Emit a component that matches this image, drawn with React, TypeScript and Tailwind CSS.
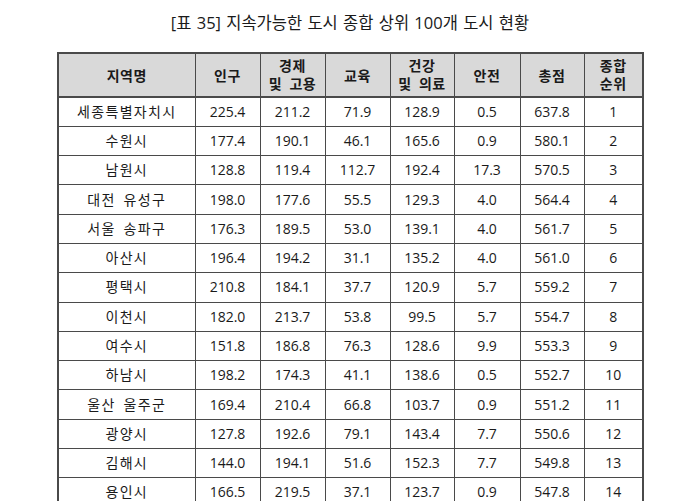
const rows: [string, string, string, string, string, string, string, string][] = [
  ["세종특별자치시", "225.4", "211.2", "71.9", "128.9", "0.5", "637.8", "1"],
  ["수원시", "177.4", "190.1", "46.1", "165.6", "0.9", "580.1", "2"],
  ["남원시", "128.8", "119.4", "112.7", "192.4", "17.3", "570.5", "3"],
  ["대전 유성구", "198.0", "177.6", "55.5", "129.3", "4.0", "564.4", "4"],
  ["서울 송파구", "176.3", "189.5", "53.0", "139.1", "4.0", "561.7", "5"],
  ["아산시", "196.4", "194.2", "31.1", "135.2", "4.0", "561.0", "6"],
  ["평택시", "210.8", "184.1", "37.7", "120.9", "5.7", "559.2", "7"],
  ["이천시", "182.0", "213.7", "53.8", "99.5", "5.7", "554.7", "8"],
  ["여수시", "151.8", "186.8", "76.3", "128.6", "9.9", "553.3", "9"],
  ["하남시", "198.2", "174.3", "41.1", "138.6", "0.5", "552.7", "10"],
  ["울산 울주군", "169.4", "210.4", "66.8", "103.7", "0.9", "551.2", "11"],
  ["광양시", "127.8", "192.6", "79.1", "143.4", "7.7", "550.6", "12"],
  ["김해시", "144.0", "194.1", "51.6", "152.3", "7.7", "549.8", "13"],
  ["용인시", "166.5", "219.5", "37.1", "123.7", "0.9", "547.8", "14"],
];

const widths = ["w-[137px]", "w-[65px]", "w-[65px]", "w-[65px]", "w-[64px]", "w-[66px]", "w-[64px]", "w-[59px]"];

export default function App() {
  return (
    <div
      className="w-[700px] h-[501px] overflow-hidden bg-white text-[#1a1a1a]"
      style={{ fontFamily: '"Open Sans", "Noto Sans CJK KR", sans-serif' }}
    >
      <h1 className="pt-[11px] text-center text-[16.5px] leading-[24px] font-normal [word-spacing:1px]">
        [표 35] 지속가능한 도시 종합 상위 100개 도시 현황
      </h1>

      <table className="mt-[17px] ml-[57px] w-[585px] table-fixed border-collapse border-2 border-[#4a4a4a]">
        <colgroup>
          {widths.map((w, i) => (
            <col key={i} className={w} />
          ))}
        </colgroup>
        <thead>
          <tr className="h-[44px] bg-[#d9d9d9] border-b-2 border-[#4a4a4a]">
            <th className="border border-[#4a4a4a] text-[14px] font-bold tracking-[0.5px]">지역명</th>
            <th className="border border-[#4a4a4a] text-[14px] font-bold tracking-[0.5px]">인구</th>
            <th className="border border-[#4a4a4a] text-[14px] font-bold leading-[18px] tracking-[0.5px] [word-spacing:3px]">
              경제
              <br />및 고용
            </th>
            <th className="border border-[#4a4a4a] text-[14px] font-bold tracking-[0.5px]">교육</th>
            <th className="border border-[#4a4a4a] text-[14px] font-bold leading-[18px] tracking-[0.5px] [word-spacing:3px]">
              건강
              <br />및 의료
            </th>
            <th className="border border-[#4a4a4a] text-[14px] font-bold tracking-[0.5px]">안전</th>
            <th className="border border-[#4a4a4a] text-[14px] font-bold tracking-[0.5px]">총점</th>
            <th className="border border-[#4a4a4a] text-[14px] font-bold leading-[18px] tracking-[0.5px]">
              종합
              <br />순위
            </th>
          </tr>
        </thead>
        <tbody>
          {rows.map((r) => (
            <tr key={r[0]} className="h-[29.3px]">
              <td className="border border-[#4a4a4a] p-0 text-center text-[14px] leading-none tracking-[1.3px] [word-spacing:3px]">
                {r[0]}
              </td>
              {r.slice(1).map((c, i) => (
                <td key={i} className="border border-[#4a4a4a] p-0 text-center text-[14px] leading-none">
                  {c}
                </td>
              ))}
            </tr>
          ))}
        </tbody>
      </table>
    </div>
  );
}
